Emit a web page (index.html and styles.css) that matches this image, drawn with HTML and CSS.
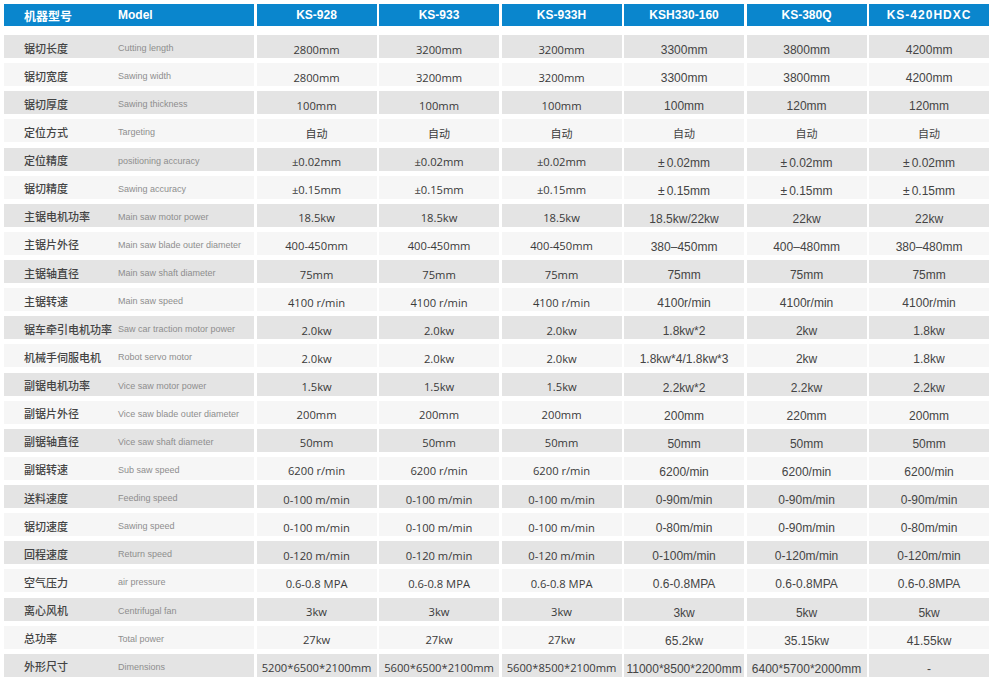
FILE: index.html
```html
<!DOCTYPE html>
<html lang="zh">
<head>
<meta charset="utf-8">
<title>机器型号参数</title>
<link rel="stylesheet" href="styles.css">
</head>
<body>
<div class="table">
  <div class="row head">
    <div class="label"><span class="cn">机器型号</span><span class="en">Model</span></div>
    <div class="cell">KS-928</div>
    <div class="cell">KS-933</div>
    <div class="cell">KS-933H</div>
    <div class="cell">KSH330-160</div>
    <div class="cell">KS-380Q</div>
    <div class="cell wide">KS-420HDXC</div>
  </div>

  <div class="row odd">
    <div class="label"><span class="cn">锯切长度</span><span class="en">Cutting length</span></div>
    <div class="cell a">2800mm</div><div class="cell a">3200mm</div><div class="cell a">3200mm</div>
    <div class="cell b">3300mm</div><div class="cell b">3800mm</div><div class="cell b">4200mm</div>
  </div>
  <div class="row even">
    <div class="label"><span class="cn">锯切宽度</span><span class="en">Sawing width</span></div>
    <div class="cell a">2800mm</div><div class="cell a">3200mm</div><div class="cell a">3200mm</div>
    <div class="cell b">3300mm</div><div class="cell b">3800mm</div><div class="cell b">4200mm</div>
  </div>
  <div class="row odd">
    <div class="label"><span class="cn">锯切厚度</span><span class="en">Sawing thickness</span></div>
    <div class="cell a">100mm</div><div class="cell a">100mm</div><div class="cell a">100mm</div>
    <div class="cell b">100mm</div><div class="cell b">120mm</div><div class="cell b">120mm</div>
  </div>
  <div class="row even">
    <div class="label"><span class="cn">定位方式</span><span class="en">Targeting</span></div>
    <div class="cell a cjk">自动</div><div class="cell a cjk">自动</div><div class="cell a cjk">自动</div>
    <div class="cell b cjk">自动</div><div class="cell b cjk">自动</div><div class="cell b cjk">自动</div>
  </div>
  <div class="row odd">
    <div class="label"><span class="cn">定位精度</span><span class="en">positioning accuracy</span></div>
    <div class="cell a">±0.02mm</div><div class="cell a">±0.02mm</div><div class="cell a">±0.02mm</div>
    <div class="cell b"><span class="pm">±</span>0.02mm</div><div class="cell b"><span class="pm">±</span>0.02mm</div><div class="cell b"><span class="pm">±</span>0.02mm</div>
  </div>
  <div class="row even">
    <div class="label"><span class="cn">锯切精度</span><span class="en">Sawing accuracy</span></div>
    <div class="cell a">±0.15mm</div><div class="cell a">±0.15mm</div><div class="cell a">±0.15mm</div>
    <div class="cell b"><span class="pm">±</span>0.15mm</div><div class="cell b"><span class="pm">±</span>0.15mm</div><div class="cell b"><span class="pm">±</span>0.15mm</div>
  </div>
  <div class="row odd">
    <div class="label"><span class="cn">主锯电机功率</span><span class="en">Main saw motor power</span></div>
    <div class="cell a">18.5kw</div><div class="cell a">18.5kw</div><div class="cell a">18.5kw</div>
    <div class="cell b">18.5kw/22kw</div><div class="cell b">22kw</div><div class="cell b">22kw</div>
  </div>
  <div class="row even">
    <div class="label"><span class="cn">主锯片外径</span><span class="en">Main saw blade outer diameter</span></div>
    <div class="cell a">400-450mm</div><div class="cell a">400-450mm</div><div class="cell a">400-450mm</div>
    <div class="cell b">380–450mm</div><div class="cell b">400–480mm</div><div class="cell b">380–480mm</div>
  </div>
  <div class="row odd">
    <div class="label"><span class="cn">主锯轴直径</span><span class="en">Main saw shaft diameter</span></div>
    <div class="cell a">75mm</div><div class="cell a">75mm</div><div class="cell a">75mm</div>
    <div class="cell b">75mm</div><div class="cell b">75mm</div><div class="cell b">75mm</div>
  </div>
  <div class="row even">
    <div class="label"><span class="cn">主锯转速</span><span class="en">Main saw speed</span></div>
    <div class="cell a">4100 r/min</div><div class="cell a">4100 r/min</div><div class="cell a">4100 r/min</div>
    <div class="cell b">4100r/min</div><div class="cell b">4100r/min</div><div class="cell b">4100r/min</div>
  </div>
  <div class="row odd">
    <div class="label"><span class="cn">锯车牵引电机功率</span><span class="en en-tight">Saw car traction motor power</span></div>
    <div class="cell a">2.0kw</div><div class="cell a">2.0kw</div><div class="cell a">2.0kw</div>
    <div class="cell b">1.8kw*2</div><div class="cell b">2kw</div><div class="cell b">1.8kw</div>
  </div>
  <div class="row even">
    <div class="label"><span class="cn">机械手伺服电机</span><span class="en">Robot servo motor</span></div>
    <div class="cell a">2.0kw</div><div class="cell a">2.0kw</div><div class="cell a">2.0kw</div>
    <div class="cell b">1.8kw*4/1.8kw*3</div><div class="cell b">2kw</div><div class="cell b">1.8kw</div>
  </div>
  <div class="row odd">
    <div class="label"><span class="cn">副锯电机功率</span><span class="en">Vice saw motor power</span></div>
    <div class="cell a">1.5kw</div><div class="cell a">1.5kw</div><div class="cell a">1.5kw</div>
    <div class="cell b">2.2kw*2</div><div class="cell b">2.2kw</div><div class="cell b">2.2kw</div>
  </div>
  <div class="row even">
    <div class="label"><span class="cn">副锯片外径</span><span class="en">Vice saw blade outer diameter</span></div>
    <div class="cell a">200mm</div><div class="cell a">200mm</div><div class="cell a">200mm</div>
    <div class="cell b">200mm</div><div class="cell b">220mm</div><div class="cell b">200mm</div>
  </div>
  <div class="row odd">
    <div class="label"><span class="cn">副锯轴直径</span><span class="en">Vice saw shaft diameter</span></div>
    <div class="cell a">50mm</div><div class="cell a">50mm</div><div class="cell a">50mm</div>
    <div class="cell b">50mm</div><div class="cell b">50mm</div><div class="cell b">50mm</div>
  </div>
  <div class="row even">
    <div class="label"><span class="cn">副锯转速</span><span class="en">Sub saw speed</span></div>
    <div class="cell a">6200 r/min</div><div class="cell a">6200 r/min</div><div class="cell a">6200 r/min</div>
    <div class="cell b">6200/min</div><div class="cell b">6200/min</div><div class="cell b">6200/min</div>
  </div>
  <div class="row odd">
    <div class="label"><span class="cn">送料速度</span><span class="en">Feeding speed</span></div>
    <div class="cell a">0-100 m/min</div><div class="cell a">0-100 m/min</div><div class="cell a">0-100 m/min</div>
    <div class="cell b">0-90m/min</div><div class="cell b">0-90m/min</div><div class="cell b">0-90m/min</div>
  </div>
  <div class="row even">
    <div class="label"><span class="cn">锯切速度</span><span class="en">Sawing speed</span></div>
    <div class="cell a">0-100 m/min</div><div class="cell a">0-100 m/min</div><div class="cell a">0-100 m/min</div>
    <div class="cell b">0-80m/min</div><div class="cell b">0-90m/min</div><div class="cell b">0-80m/min</div>
  </div>
  <div class="row odd">
    <div class="label"><span class="cn">回程速度</span><span class="en">Return speed</span></div>
    <div class="cell a">0-120 m/min</div><div class="cell a">0-120 m/min</div><div class="cell a">0-120 m/min</div>
    <div class="cell b">0-100m/min</div><div class="cell b">0-120m/min</div><div class="cell b">0-120m/min</div>
  </div>
  <div class="row even">
    <div class="label"><span class="cn">空气压力</span><span class="en">air pressure</span></div>
    <div class="cell a">0.6-0.8 MPA</div><div class="cell a">0.6-0.8 MPA</div><div class="cell a">0.6-0.8 MPA</div>
    <div class="cell b">0.6-0.8MPA</div><div class="cell b">0.6-0.8MPA</div><div class="cell b">0.6-0.8MPA</div>
  </div>
  <div class="row odd">
    <div class="label"><span class="cn">离心风机</span><span class="en">Centrifugal fan</span></div>
    <div class="cell a">3kw</div><div class="cell a">3kw</div><div class="cell a">3kw</div>
    <div class="cell b">3kw</div><div class="cell b">5kw</div><div class="cell b">5kw</div>
  </div>
  <div class="row even">
    <div class="label"><span class="cn">总功率</span><span class="en">Total power</span></div>
    <div class="cell a">27kw</div><div class="cell a">27kw</div><div class="cell a">27kw</div>
    <div class="cell b">65.2kw</div><div class="cell b">35.15kw</div><div class="cell b">41.55kw</div>
  </div>
  <div class="row odd">
    <div class="label"><span class="cn">外形尺寸</span><span class="en">Dimensions</span></div>
    <div class="cell a">5200*6500*2100mm</div><div class="cell a">5600*6500*2100mm</div><div class="cell a">5600*8500*2100mm</div>
    <div class="cell b">11000*8500*2200mm</div><div class="cell b">6400*5700*2000mm</div><div class="cell b">-</div>
  </div>
</div>
</body>
</html>
```

FILE: styles.css
```css
html, body {
  margin: 0;
  padding: 0;
  background: #ffffff;
}

body {
  font-family: "Liberation Sans", Arial, "Noto Sans CJK SC", sans-serif;
  color: #333333;
}

.table {
  display: flex;
  flex-direction: column;
  gap: 5.14px;
  width: 985px;
  padding: 4px 0 0 4px;
}

.row {
  display: grid;
  grid-template-columns: 250px repeat(6, 1fr);
  column-gap: 2.6px;
  height: 23px;
}

.row.head {
  height: 22px;
  margin-bottom: 3.9px;
}

.row.head > div {
  background: #0a86cd;
  color: #ffffff;
}

.row.odd > div {
  background: #e4e4e4;
}

.row.even > div {
  background: #f6f6f6;
}

.label {
  display: flex;
  align-items: center;
  padding: 2px 0 0 20px;
  box-sizing: border-box;
}

.cn {
  width: 94px;
  flex: none;
  font-family: "Noto Sans CJK SC", sans-serif;
  font-size: 11px;
  font-weight: 500;
  color: #444444;
  white-space: nowrap;
}

.en {
  font-family: "Liberation Sans", Arial, sans-serif;
  font-size: 9px;
  color: #8e8e8e;
  white-space: nowrap;
  padding-top: 1px;
}

.head .label {
  padding-top: 0;
}

.head .cn {
  font-size: 12px;
  font-weight: 700;
  color: #ffffff;
}

.head .en {
  font-size: 12px;
  font-weight: 700;
  color: #ffffff;
  padding-top: 0;
}

.cell {
  display: flex;
  align-items: center;
  justify-content: center;
  white-space: nowrap;
  font-size: 12px;
  color: #3a3a3a;
  padding-top: 5px;
  box-sizing: border-box;
}

.head .cell {
  font-weight: 700;
  font-size: 12px;
  padding-top: 0;
}

.head .cell.wide {
  letter-spacing: 1px;
}

.cell.a {
  font-family: "Open Sans", "Liberation Sans", sans-serif;
  font-size: 11.2px;
}

.cell.b {
  font-family: "Liberation Sans", Arial, sans-serif;
  font-size: 12px;
  color: #444444;
  padding-top: 7px;
}

.cell.cjk {
  font-family: "Noto Sans CJK SC", sans-serif;
  font-size: 11px;
  padding-top: 5px;
}

.pm {
  margin-right: 2px;
}
```
